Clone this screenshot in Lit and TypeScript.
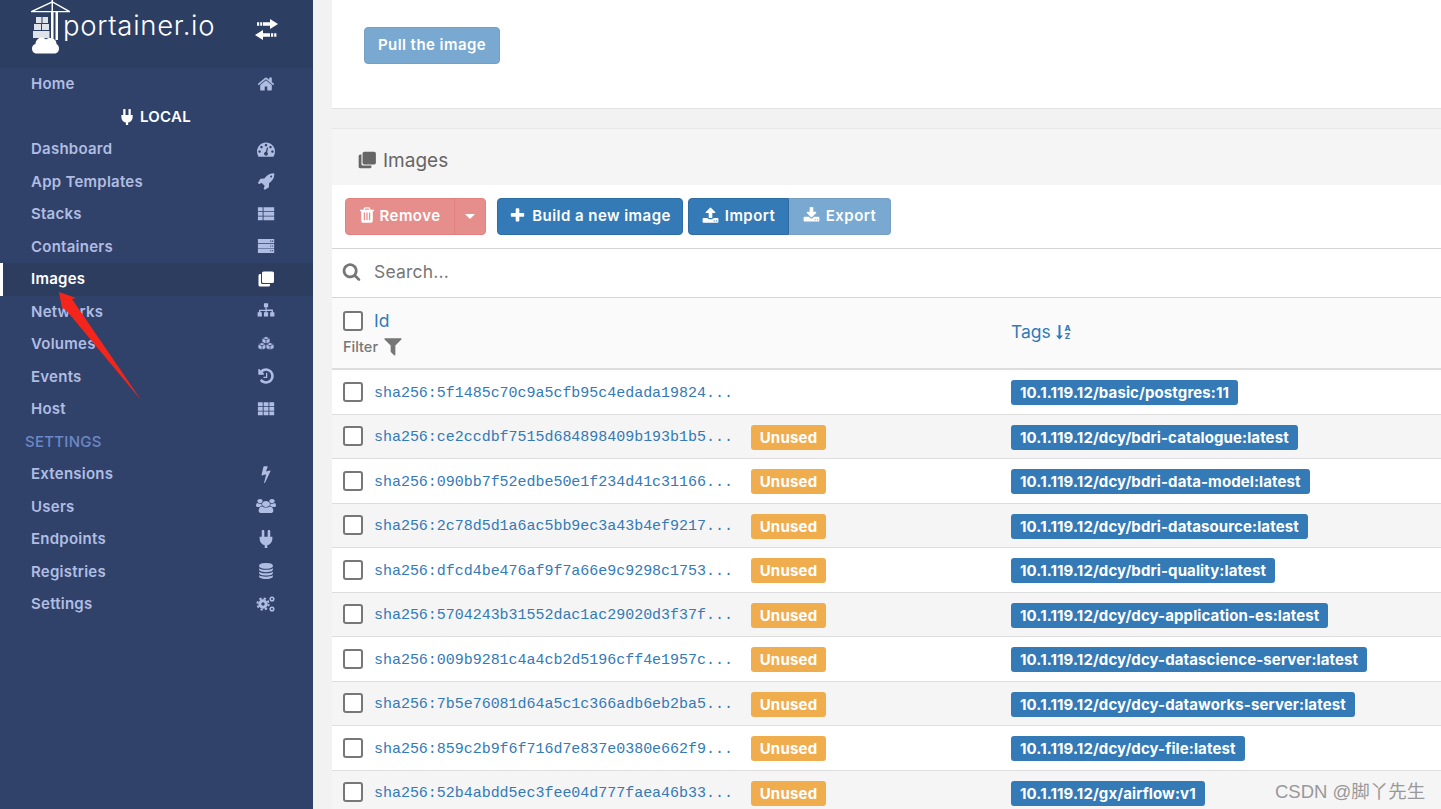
import { LitElement, html, css, svg } from "lit";
import { customElement } from "lit/decorators.js";

const P: Record<string, string> = {
  home: "M1472 992v480q0 26-19 45t-45 19h-384v-384h-256v384h-384q-26 0-45-19t-19-45v-480q0-1 .5-3t.5-3l575-474 575 474q1 2 1 6zm223-69l-62 74q-8 9-21 11h-3q-13 0-21-7l-692-577-692 577q-12 8-24 7-13-2-21-11l-62-74q-8-10-7-23.500t11-21.500l719-599q32-26 76-26t76 26l244 204v-195q0-14 9-23t23-9h192q14 0 23 9t9 23v408l219 182q10 8 11 21.500t-7 23.500z",
  search: "M1216 832q0-185-131.500-316.500t-316.500-131.500-316.500 131.500-131.500 316.500 131.500 316.500 316.500 131.500 316.500-131.500 131.500-316.500zm512 832q0 52-38 90t-90 38q-54 0-90-38l-343-342q-179 124-399 124-143 0-273.500-55.500t-225-150-150-225-55.500-273.500 55.500-273.500 150-225 225-150 273.500-55.500 273.500 55.500 225 150 150 225 55.500 273.500q0 220-124 399l343 343q37 37 37 90z",
  plus: "M1600 736v192q0 40-28 68t-68 28h-416v416q0 40-28 68t-68 28h-192q-40 0-68-28t-28-68v-416h-416q-40 0-68-28t-28-68v-192q0-40 28-68t68-28h416v-416q0-40 28-68t68-28h192q40 0 68 28t28 68v416h416q40 0 68 28t28 68z",
  filter: "M1595 295q17 41-14 70l-493 493v742q0 42-39 59-13 5-25 5-27 0-45-19l-256-256q-19-19-19-45v-486l-493-493q-31-29-14-70 17-39 59-39h1280q42 0 59 39z",
  bolt: "M1333 566q18 20 7 44l-540 1157q-13 25-42 25-4 0-14-2-17-5-25.500-19t-4.500-30l197-808-406 101q-4 1-12 1-18 0-31-11-18-15-13-39l201-825q4-14 16-23t28-9h328q19 0 32 12.500t13 29.500q0 8-5 18l-171 463 396-98q8-2 12-2 19 0 34 15z",
  plug: "M1755 453q37 38 37 90.500t-37 90.500l-401 400 150 150-160 160q-163 163-389.500 186.500t-411.500-100.500l-362 362h-181v-181l362-362q-124-185-100.500-411.500t186.500-389.500l160-160 150 150 400-401q38-37 91-37t90 37 37 90.500-37 90.500l-400 401 234 234 401-400q38-37 91-37t90 37z",
  database: "M896 768q237 0 443-43t325-127v170q0 69-103 128t-280 93.500-385 34.500-385-34.500-280-93.500-103-128v-170q119 84 325 127t443 43zm0 768q237 0 443-43t325-127v170q0 69-103 128t-280 93.500-385 34.500-385-34.500-280-93.500-103-128v-170q119 84 325 127t443 43zm0-384q237 0 443-43t325-127v170q0 69-103 128t-280 93.500-385 34.500-385-34.500-280-93.500-103-128v-170q119 84 325 127t443 43zm0-1152q208 0 385 34.500t280 93.500 103 128v128q0 69-103 128t-280 93.500-385 34.500-385-34.500-280-93.500-103-128v-128q0-69 103-128t280-93.500 385-34.500z",
  rocket: "M1504 448q0-40-28-68t-68-28-68 28-28 68 28 68 68 28 68-28 28-68zm224-288q0 249-75.500 430.500t-253.500 360.500q-81 80-195 176l-20 379q-2 16-16 26l-384 224q-7 4-16 4-12 0-23-9l-64-64q-13-14-8-32l85-276-281-281-276 85q-3 1-9 1-14 0-23-9l-64-64q-17-19-5-39l224-384q10-14 26-16l379-20q96-114 176-195 188-187 358-258t431-71q14 0 24 9.500t10 22.500z",
  dashboard: "M384 1152q0-53-37.500-90.500t-90.500-37.500-90.500 37.500-37.500 90.500 37.500 90.500 90.500 37.500 90.500-37.500 37.500-90.500zm192-448q0-53-37.500-90.500t-90.500-37.500-90.500 37.500-37.500 90.500 37.500 90.500 90.500 37.500 90.500-37.500 37.500-90.500zm428 506l101-382q6-26-7.500-48.500t-38.500-29.500-48 6.500-30 39.500l-101 382q-60 5-107 43.500t-63 98.500q-20 77 20 146t117 89 146-20 89-117q16-60-6-117t-72-91zm660-58q0-53-37.500-90.500t-90.500-37.500-90.500 37.500-37.500 90.500 37.500 90.500 90.500 37.500 90.500-37.500 37.500-90.500zm-640-640q0-53-37.500-90.500t-90.500-37.500-90.500 37.500-37.500 90.500 37.500 90.500 90.500 37.500 90.500-37.500 37.500-90.500zm448 192q0-53-37.500-90.500t-90.500-37.500-90.500 37.500-37.500 90.500 37.500 90.500 90.500 37.500 90.500-37.500 37.500-90.500zm320 448q0 261-141 483-19 29-54 29h-1402q-35 0-54-29-141-221-141-483 0-182 71-348t191-286 286-191 348-71 348 71 286 191 191 286 71 348z",
  users: "M593 896q-162 5-265 128h-134q-82 0-138-40.500t-56-118.500q0-353 124-353 6 0 43.500 21t97.500 42.500 119 21.500q67 0 133-23-5 37-5 66 0 139 81 256zm1071 637q0 120-73 189.500t-194 69.500h-874q-121 0-194-69.500t-73-189.500q0-53 3.500-103.500t14-109 26.500-108.500 43-97.500 62-81 85.500-53.500 111.500-20q10 0 43 21.500t73 48 107 48 135 21.500 135-21.500 107-48 73-48 43-21.500q61 0 111.500 20t85.500 53.500 62 81 43 97.500 26.500 108.500 14 109 3.500 103.500zm-1024-1277q0 106-75 181t-181 75-181-75-75-181 75-181 181-75 181 75 75 181zm704 384q0 159-112.500 271.500t-271.500 112.500-271.500-112.500-112.500-271.500 112.500-271.500 271.500-112.500 271.500 112.500 112.500 271.500zm576 225q0 78-56 118.500t-138 40.500h-134q-103-123-265-128 81-117 81-256 0-29-5-66 66 23 133 23 59 0 119-21.500t97.500-42.500 43.500-21q124 0 124 353zm-128-609q0 106-75 181t-181 75-181-75-75-181 75-181 181-75 181 75 75 181z",
  history: "M1664 896q0 156-61 298t-164 245-245 164-298 61q-172 0-327-72.500t-264-204.500q-7-10-6.500-22.500t8.500-20.500l137-138q10-9 25-9 16 2 23 12 73 95 179 147t225 52q104 0 198.500-40.500t163.500-109.500 109.500-163.500 40.500-198.500-40.500-198.500-109.500-163.500-163.500-109.500-198.500-40.500q-98 0-188 35.500t-160 101.500l137 138q31 30 14 69-17 40-59 40h-448q-26 0-45-19t-19-45v-448q0-42 40-59 39-17 69 14l130 129q107-101 244.500-156.500t284.500-55.500q156 0 298 61t245 164 164 245 61 298zm-640-288v448q0 14-9 23t-23 9h-320q-14 0-23-9t-9-23v-64q0-14 9-23t23-9h224v-352q0-14 9-23t23-9h64q14 0 23 9t9 23z",
  trash: "M704 1376v-704q0-14-9-23t-23-9h-64q-14 0-23 9t-9 23v704q0 14 9 23t23 9h64q14 0 23-9t9-23zm256 0v-704q0-14-9-23t-23-9h-64q-14 0-23 9t-9 23v704q0 14 9 23t23 9h64q14 0 23-9t9-23zm256 0v-704q0-14-9-23t-23-9h-64q-14 0-23 9t-9 23v704q0 14 9 23t23 9h64q14 0 23-9t9-23zm-544-992h448l-48-117q-7-9-17-11h-317q-10 2-17 11zm928 32v64q0 14-9 23t-23 9h-96v948q0 83-47 143.500t-113 60.500h-832q-66 0-113-58.500t-47-141.500v-952h-96q-14 0-23-9t-9-23v-64q0-14 9-23t23-9h309l70-167q15-37 54-63t79-26h320q40 0 79 26t54 63l70 167h309q14 0 23 9t9 23z",
  upload: "M1344 1472q0-26-19-45t-45-19-45 19-19 45 19 45 45 19 45-19 19-45zm256 0q0-26-19-45t-45-19-45 19-19 45 19 45 45 19 45-19 19-45zm128-224v320q0 40-28 68t-68 28h-1472q-40 0-68-28t-28-68v-320q0-40 28-68t68-28h427q21 56 70.500 92t110.500 36h256q61 0 110.500-36t70.500-92h427q40 0 68 28t28 68zm-325-648q-17 40-59 40h-256v448q0 26-19 45t-45 19h-256q-26 0-45-19t-19-45v-448h-256q-42 0-59-40-17-39 14-69l448-448q18-19 45-19t45 19l448 448q31 30 14 69z",
  download: "M1344 1344q0-26-19-45t-45-19-45 19-19 45 19 45 45 19 45-19 19-45zm256 0q0-26-19-45t-45-19-45 19-19 45 19 45 45 19 45-19 19-45zm128-224v320q0 40-28 68t-68 28h-1472q-40 0-68-28t-28-68v-320q0-40 28-68t68-28h465l135 136q58 56 136 56t136-56l136-136h464q40 0 68 28t28 68zm-325-569q17 41-14 70l-448 448q-18 19-45 19t-45-19l-448-448q-31-29-14-70 17-39 59-39h256v-448q0-26 19-45t45-19h256q26 0 45 19t19 45v448h256q42 0 59 39z",
  thlist: "M90 230h470v380H90zM650 230h1060v380H650zM90 690h470v380H90zM650 690h1060v380H650zM90 1150h470v380H90zM650 1150h1060v380H650z",
  th: "M90 230h480v380H90zM660 230h480v380H660zM1230 230h480v380h-480zM90 690h480v380H90zM660 690h480v380H660zM1230 690h480v380h-480zM90 1150h480v380H90zM660 1150h480v380H660zM1230 1150h480v380h-480z",
  server: "M90 210h1620v420H90zM1310 360v110h110V360zM1500 360v110h110V360zM90 690h1620v420H90zM1310 840v110h110V840zM1500 840v110h110V840zM90 1170h1620v420H90zM1310 1320v110h110v-110zM1500 1320v110h110v-110z",
  sitemap: "M690 130h420v400H960v220h580q50 0 50 50v220h140v420h-420v-420h140v-130H960v130h150v420H690v-420h150v-130H340v130h140v420H60v-420h140V820q0-50 50-50h590V530H690z",
};

const ic = (name: string, size = 18, rot = 0) => html`<svg class="ic" width=${size} height=${size} viewBox="0 0 1792 1792" fill="currentColor" fill-rule="evenodd">${svg`<path transform=${rot ? `rotate(${rot} 896 896)` : ""} d=${P[name]}></path>`}</svg>`;

const cloneIcon = (size: number) => html`<svg class="ic" width=${size} height=${size} viewBox="0 0 18 18" fill="currentColor"><path d="M1.500 5.500A1.500 1.500 0 0 1 3 4h1v8.500A1.500 1.500 0 0 0 5.500 14H13v1a1.500 1.500 0 0 1-1.500 1.500H3A1.500 1.500 0 0 1 1.500 15z"></path><rect x="5" y="1.500" width="12" height="11.500" rx="1.600"></rect></svg>`;

const cogs = html`<svg class="ic" width="20" height="18" viewBox="0 0 20 18" fill="none" stroke="currentColor"><circle cx="7" cy="9" r="3.200" stroke-width="3"></circle><circle cx="7" cy="9" r="5.600" stroke-width="2" stroke-dasharray="2.300 2.100"></circle><circle cx="16" cy="4" r="1.800" stroke-width="1.500"></circle><circle cx="16" cy="14" r="1.800" stroke-width="1.500"></circle></svg>`;

const cubes = html`<svg class="ic" width="18" height="18" viewBox="0 0 18 18" fill="currentColor" stroke="#30426a" stroke-width="0.800"><path d="M9 1.500l4 1.600v4.300L9 9 5 7.400V3.100z"></path><path d="M5 7.500l4 1.600v4.300L5 15l-4-1.600V9.100z"></path><path d="M13 7.500l4 1.600v4.300L13 15l-4-1.600V9.100z"></path><path d="M5 3.100l4 1.600 4-1.600M9 4.700V9M1 9.100l4 1.600 4-1.600M5 10.700V15M9 9.100l4 1.600 4-1.600M13 10.700V15" fill="none"></path></svg>`;

const usersIcon = html`<svg class="ic" width="20" height="14" viewBox="0 0 1920 1792" preserveAspectRatio="none" fill="currentColor"><path d=${P.users}></path></svg>`;

const swap = html`<svg class="ic" width="24" height="21" viewBox="0 0 24 21" fill="#fff"><path d="M15 0l8 5-8 5V6.800H8V3.200h7zM2 3.200h2.200v3.600H2zM5.200 3.200h2v3.600h-2zM8 11l-8 5 8 5v-3.200h7v-3.600H8zM16 14.200h2.200v3.600H16zM19.200 14.200h2.200v3.600h-2.200z"></path></svg>`;

const NAV_TOP = [
  ["Dashboard", "dashboard"], ["App Templates", "rocket"], ["Stacks", "thlist"], ["Containers", "server"],
  ["Images", "clone"], ["Networks", "sitemap"], ["Volumes", "cubes"], ["Events", "history"], ["Host", "th"],
];
const NAV_SET = [
  ["Extensions", "bolt"], ["Users", "users"], ["Endpoints", "plug"], ["Registries", "database"], ["Settings", "cogs"],
];
const ROWS: [string, string, boolean][] = [
  ["sha256:5f1485c70c9a5cfb95c4edada19824...", "10.1.119.12/basic/postgres:11", false],
  ["sha256:ce2ccdbf7515d684898409b193b1b5...", "10.1.119.12/dcy/bdri-catalogue:latest", true],
  ["sha256:090bb7f52edbe50e1f234d41c31166...", "10.1.119.12/dcy/bdri-data-model:latest", true],
  ["sha256:2c78d5d1a6ac5bb9ec3a43b4ef9217...", "10.1.119.12/dcy/bdri-datasource:latest", true],
  ["sha256:dfcd4be476af9f7a66e9c9298c1753...", "10.1.119.12/dcy/bdri-quality:latest", true],
  ["sha256:5704243b31552dac1ac29020d3f37f...", "10.1.119.12/dcy/dcy-application-es:latest", true],
  ["sha256:009b9281c4a4cb2d5196cff4e1957c...", "10.1.119.12/dcy/dcy-datascience-server:latest", true],
  ["sha256:7b5e76081d64a5c1c366adb6eb2ba5...", "10.1.119.12/dcy/dcy-dataworks-server:latest", true],
  ["sha256:859c2b9f6f716d7e837e0380e662f9...", "10.1.119.12/dcy/dcy-file:latest", true],
  ["sha256:52b4abdd5ec3fee04d777faea46b33...", "10.1.119.12/gx/airflow:v1", true],
];

@customElement("app-root")
export class AppRoot extends LitElement {
  static styles = css`
    :host { display: block; width: 1441px; height: 809px; overflow: hidden; position: relative; font-family: Inter, "Noto Sans", sans-serif; background: #f2f2f2; }
    * { box-sizing: border-box; }
    .ic { display: block; flex: none; }
    .page { display: flex; height: 809px; }
    .side { width: 313px; flex: none; background: #30426a; color: #b0bde2; font-size: 15px; font-weight: 600; letter-spacing: 0.25px; }
    .brand { height: 68px; background: #2d3e63; display: flex; align-items: flex-start; padding-left: 31px; position: relative; color: #fff; }
    .logo { overflow: visible; }
    .brand .name { font-size: 27.500px; font-weight: 300; margin: 8px 0 0 0; letter-spacing: 0.7px; line-height: 34px; font-family: Inter, sans-serif; }
    .brand .swap { position: absolute; left: 255px; top: 19px; }
    .nav { height: 32.500px; display: flex; align-items: center; justify-content: space-between; padding: 0 36px 1px 31px; }
    .nav .slot { width: 22px; display: flex; justify-content: center; }
    .nav.active { background: #2d3d60; color: #fff; box-shadow: inset 3px 0 0 #fff; }
    .endpoint { height: 32.500px; display: flex; align-items: center; justify-content: center; gap: 5px; color: #fff; padding-right: 3px; }
    .section { height: 32.500px; display: flex; align-items: center; padding-left: 25px; color: #6d88c5; font-weight: 500; }
    .main { flex: 1; padding: 0 0 0 19px; min-width: 0; }
    .card-top { height: 109px; background: #fff; border-bottom: 1px solid #e3e3e3; padding: 27px 0 0 32px; }
    .btn { display: inline-flex; align-items: center; gap: 6px; height: 37px; padding: 0 0 3px; border: 1px solid #2e6da4; border-radius: 4px; background: #337ab7; color: #fff; font-size: 15px; font-weight: 600; letter-spacing: 0.45px; font-family: inherit; }
    .faded { opacity: 0.65; }
    .pull { width: 136px; justify-content: center; }
    .card { margin-top: 19px; background: #fff; border-top: 1px solid #e8e8e8; }
    .card-head { height: 56px; background: #f5f5f5; display: flex; align-items: center; gap: 6px; padding: 6px 0 0 25px; color: #666; font-size: 19px; font-weight: 400; }
    .toolbar { height: 64px; padding: 13px 0 0 13px; display: flex; border-bottom: 1px solid #d4d4d4; }
    .group { display: flex; }
    .danger { background: #d9534f; border-color: #d43f3a; }
    .split { width: 110px; border-radius: 4px 0 0 4px; justify-content: center; gap: 4px; padding-right: 2px; }
    .caret { width: 32px; margin-left: -1px; border-radius: 0 4px 4px 0; padding: 0; justify-content: center; }
    .caret i { width: 0; height: 0; border: 5px solid transparent; border-top-color: #fff; border-bottom: 0; }
    .build { margin-left: 11px; width: 186px; justify-content: center; }
    .imp { margin-left: 5px; width: 101px; border-radius: 4px 0 0 4px; justify-content: center; }
    .exp { width: 102px; border-radius: 0 4px 4px 0; justify-content: center; border-left: 0; }
    .search { height: 49px; display: flex; align-items: center; gap: 13px; padding: 0 0 3px 10px; border-bottom: 1px solid #d4d4d4; color: #767676; font-size: 17.500px; font-weight: 400; letter-spacing: 0.2px; }
    .thead { height: 72px; background: #fafafa; border-bottom: 2px solid #ddd; display: grid; grid-template-columns: 679px 1fr; color: #337ab7; font-size: 17.500px; }
    .th-id { padding: 12px 0 0 11px; }
    .th-id .top { display: flex; align-items: center; gap: 11px; }
    .filter { display: flex; align-items: center; gap: 4px; color: #767676; font-size: 14.500px; font-weight: 500; margin-top: 4px; }
    .th-tags { display: flex; align-items: center; gap: 4px; padding-bottom: 3px; }
    .sort { font-family: Inter, sans-serif; }
    .cb { width: 20px; height: 20px; border: 2px solid #777; border-radius: 3px; background: #fff; flex: none; }
    .row { height: 44.500px; display: grid; grid-template-columns: 419px 260px 1fr; align-items: center; border-bottom: 1px solid #ddd; background: #fff; }
    .row:nth-child(even) { background: #f5f5f5; }
    .row .id { display: flex; align-items: center; gap: 11px; padding-left: 11px; color: #337ab7; font-family: "Liberation Mono", monospace; font-size: 15px; letter-spacing: -0.03px; white-space: nowrap; }
    .row .hash { padding-top: 3px; }
    .label { display: inline-block; height: 25px; line-height: 25px; margin-top: 2px; border-radius: 3px; color: #fff; font-size: 15px; font-weight: 700; padding: 0 9px; white-space: nowrap; }
    .unused { background: #f0ad4e; width: 75px; text-align: center; padding: 0; letter-spacing: 0.2px; }
    .tag { background: #337ab7; letter-spacing: 0.11px; }
    .arrow { position: absolute; left: 0; top: 0; pointer-events: none; }
    .wm { position: absolute; left: 1275px; top: 777px; color: #999; font-size: 18.500px; font-family: "Liberation Sans", "Noto Sans CJK SC", sans-serif; white-space: nowrap; }
  `;

  private navRow(label: string, icon: string) {
    let i;
    if (icon === "clone") i = cloneIcon(18);
    else if (icon === "cogs") i = cogs;
    else if (icon === "cubes") i = cubes;
    else if (icon === "users") i = usersIcon;
    else i = ic(icon, icon === "database" ? 16 : 18, icon === "plug" ? -45 : 0);
    return html`<div class="nav ${label === "Images" ? "active" : ""}"><span>${label}</span><span class="slot">${i}</span></div>`;
  }

  render() {
    return html`
      <div class="page">
        <aside class="side">
          <div class="brand">
            <svg class="ic logo" width="32" height="54" viewBox="0 0 32 54" fill="#fff">
              <path d="M20.500 0h1.500v1.500L39 11v1.300H27v27.700h-2.500V12.300h-2v27.700H20V12.300H0V11l20.500-9.500zM3.500 10.900h17V3zM22 3v7.900h14z"></path>
              <path d="M5 17h5.500v6H5zM11.500 17H17v6h-5.500zM3 24h7v6H3zM11 24h7v6h-7zM2 31h16.500v7H2z" opacity=".85"></path>
              <path d="M6 53.500c-3 0-5-2-5-5 0-2.500 1.500-4 3.500-4.500 0-3.500 3-6.500 6-6.500 2 0 3.500 1 4.500 2 1-1 2.500-1.500 4-1.500 4 0 6.500 2.500 6.500 6 1.500.5 2.500 2.500 2.500 4.500 0 3-2 5-5 5z"></path>
            </svg>
            <span class="name">portainer.io</span>
            <span class="swap">${swap}</span>
          </div>
          ${this.navRow("Home", "home")}
          <div class="endpoint">${ic("plug", 16, -45)}<span>LOCAL</span></div>
          ${NAV_TOP.map(([l, i]) => this.navRow(l, i))}
          <div class="section">SETTINGS</div>
          ${NAV_SET.map(([l, i]) => this.navRow(l, i))}
        </aside>
        <main class="main">
          <div class="card-top"><button class="btn faded pull">Pull the image</button></div>
          <section class="card">
            <div class="card-head">${cloneIcon(20)}<span>Images</span></div>
            <div class="toolbar">
              <div class="group faded">
                <button class="btn danger split">${ic("trash", 18)}Remove</button>
                <button class="btn danger caret"><i></i></button>
              </div>
              <button class="btn build">${ic("plus", 17)}Build a new image</button>
              <div class="group">
                <button class="btn imp">${ic("upload", 17)}Import</button>
                <button class="btn exp faded">${ic("download", 17)}Export</button>
              </div>
            </div>
            <div class="search">${ic("search", 19)}<span>Search...</span></div>
            <div class="thead">
              <div class="th-id">
                <div class="top"><span class="cb"></span><span>Id</span></div>
                <div class="filter"><span>Filter</span>${ic("filter", 22)}</div>
              </div>
              <div class="th-tags"><span>Tags</span>
                <svg class="ic" width="18" height="18" viewBox="0 0 18 18" fill="currentColor">
                  <path d="M3.500 2h2v10.500H8L4.500 16.500 1 12.500h2.500z"></path>
                  <text class="sort" x="9.500" y="8" font-size="8" font-weight="800">A</text>
                  <text class="sort" x="9.800" y="16" font-size="8" font-weight="800">Z</text>
                </svg>
              </div>
            </div>
            <div class="rows">
              ${ROWS.map(([id, tag, unused]) => html`
                <div class="row">
                  <div class="id"><span class="cb"></span><span class="hash">${id}</span></div>
                  <div>${unused ? html`<span class="label unused">Unused</span>` : ""}</div>
                  <div><span class="label tag">${tag}</span></div>
                </div>`)}
            </div>
          </section>
        </main>
      </div>
      <svg class="arrow" width="160" height="410" viewBox="0 0 160 410"><polygon points="59,292 76,298 72,299 141,400 66,310 62,308" fill="#f4261c"></polygon></svg>
      <div class="wm">CSDN @脚丫先生</div>
    `;
  }
}
